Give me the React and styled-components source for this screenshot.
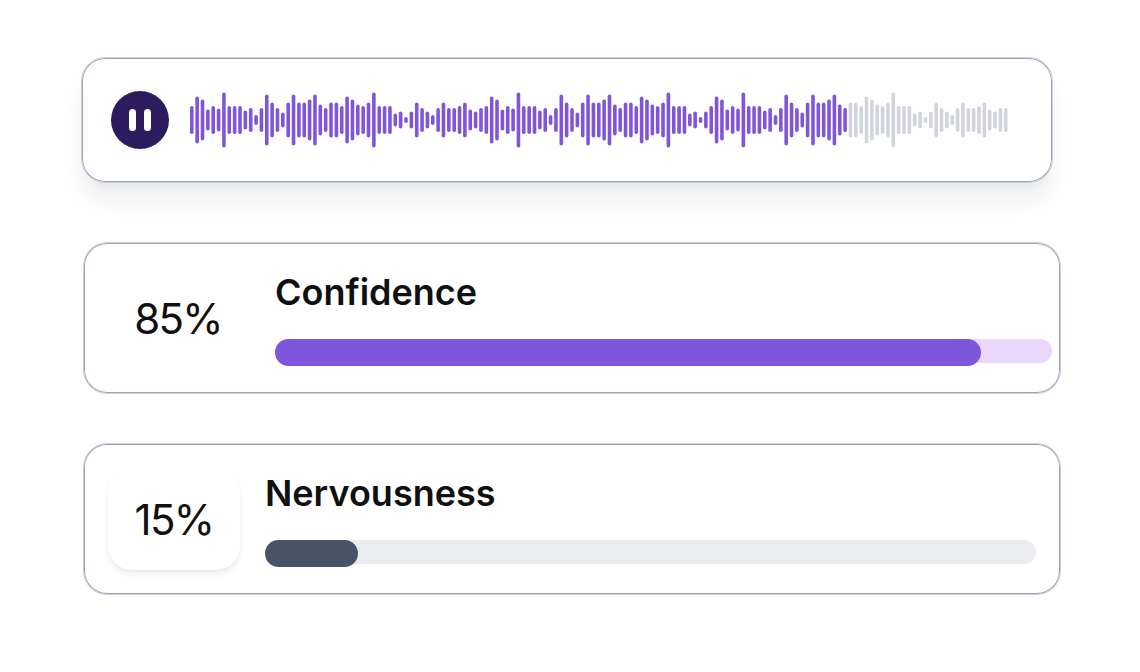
import React from "react";
import styled, { createGlobalStyle } from "styled-components";

const base = [
  28, 47, 41, 21, 28, 23, 55, 28, 28, 28, 19, 24, 10, 24, 51, 35, 24, 15, 35, 51, 35, 35, 41, 51, 31, 24, 35, 35,
  28, 47, 41, 31, 28, 35, 55, 28, 28, 28, 13, 17, 6, 17, 35, 24, 17, 10, 24, 35, 24, 24, 28, 35, 21, 17, 24,
];
const bars = [...base, ...base.slice(0, 42), ...base, 24];
const PLAYED = 123;
const STEP = 5.355;

const Waveform = () => (
  <WaveSvg viewBox="0 0 822 60" width="822" height="60">
    {bars.map((h, i) => (
      <rect
        key={i}
        x={i * STEP}
        y={30 - h / 2}
        width="3.6"
        height={h}
        rx="1.8"
        fill={i < PLAYED ? "#7f56d9" : "#d0d5dd"}
      />
    ))}
  </WaveSvg>
);

const Metric = ({ value, label, percent, raised, fill, track, ...rest }) => (
  <MetricCard {...rest}>
    <Score $raised={raised}>{value}</Score>
    <Info>
      <Label>{label}</Label>
      <Track $color={track}>
        <Fill $color={fill} style={{ width: `${percent}%` }} />
      </Track>
    </Info>
  </MetricCard>
);

const App = () => {
  return (
    <Page>
      <GlobalStyle />
      <PlayerCard>
        <PauseButton>
          <PauseBar />
          <PauseBar />
        </PauseButton>
        <Waveform />
      </PlayerCard>
      <Metric
        $left={83}
        $top={59}
        $width={978}
        $pad={28}
        $gap={31}
        $info={777}
        value="85%"
        label="Confidence"
        percent={90.9}
        fill="#7f56d9"
        track="#e9d7fe"
      />
      <Metric
        $left={83}
        $top={49}
        $width={978}
        $pad={24}
        $gap={25}
        $info={771}
        raised
        value="15%"
        label="Nervousness"
        percent={12}
        fill="#475467"
        track="#eaecf0"
      />
    </Page>
  );
};

export default App;

const GlobalStyle = createGlobalStyle`
  html, body {
    margin: 0;
    padding: 0;
    background: #ffffff;
  }
  body {
    font-family: Inter, "Liberation Sans", sans-serif;
    color: #101010;
  }
`;

const Page = styled.div`
  width: 1140px;
  height: 672px;
  padding-top: 57px;
  box-sizing: border-box;
  overflow: hidden;
`;

const PlayerCard = styled.div`
  display: flex;
  align-items: center;
  box-sizing: border-box;
  width: 972px;
  height: 126px;
  margin-left: 81px;
  padding-left: 29px;
  gap: 21px;
  background: #ffffff;
  border: 1px solid #ccd1db;
  border-radius: 24px;
  box-shadow: inset 0 0 0 1px #98a2b3, 0 20px 24px -4px rgba(16, 24, 40, 0.08), 0 8px 8px -4px rgba(16, 24, 40, 0.03);
`;

const PauseButton = styled.div`
  display: flex;
  align-items: center;
  justify-content: center;
  gap: 7.5px;
  flex: none;
  width: 58px;
  height: 58px;
  margin-top: -1px;
  border-radius: 50%;
  background: #2c1c5f;
`;

const PauseBar = styled.span`
  width: 7.5px;
  height: 22px;
  border-radius: 4px;
  background: #ffffff;
`;

const WaveSvg = styled.svg`
  display: block;
  flex: none;
`;

const MetricCard = styled.div`
  display: flex;
  align-items: center;
  box-sizing: border-box;
  width: ${(props) => props.$width}px;
  height: 152px;
  margin-left: ${(props) => props.$left}px;
  margin-top: ${(props) => props.$top}px;
  padding-left: ${(props) => props.$pad}px;
  gap: ${(props) => props.$gap}px;
  --info-width: ${(props) => props.$info}px;
  background: #ffffff;
  border: 1px solid #ccd1db;
  border-radius: 24px;
  box-shadow: inset 0 0 0 1px #98a2b3;
`;

const Score = styled.div`
  display: flex;
  align-items: center;
  justify-content: center;
  flex: none;
  width: 132px;
  height: 101px;
  border-radius: 24px;
  font-size: 42px;
  font-weight: 400;
  letter-spacing: -0.04em;
  background: #ffffff;
  box-shadow: ${(props) =>
    props.$raised ? "0 4px 8px -2px rgba(16, 24, 40, 0.1), 0 2px 4px -2px rgba(16, 24, 40, 0.06)" : "none"};
`;

const Info = styled.div`
  display: flex;
  flex-direction: column;
  flex: none;
  width: var(--info-width);
  height: 102px;
  margin-top: -1px;
`;

const Label = styled.div`
  font-size: 36px;
  font-weight: 560;
  line-height: 50px;
  height: 72px;
`;

const Track = styled.div`
  height: 24px;
  border-radius: 12px;
  background: ${(props) => props.$color};
`;

const Fill = styled.div`
  height: 27px;
  border-radius: 13.5px;
  background: ${(props) => props.$color};
`;
